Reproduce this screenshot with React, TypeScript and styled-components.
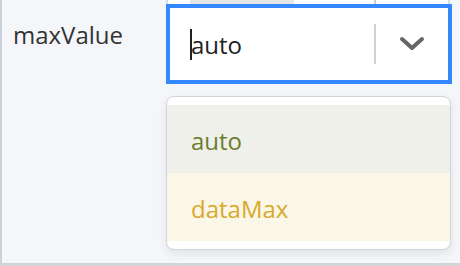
import styled, { createGlobalStyle } from "styled-components";

const GlobalStyle = createGlobalStyle`
  body {
    margin: 0;
    font-family: "Open Sans", "Noto Sans", sans-serif;
  }
`;

const Panel = styled.div`
  width: 460px;
  height: 266px;
  box-sizing: border-box;
  background: #f5f6fa;
  border-left: 2px solid #cbd2dc;
  border-bottom: 3px solid #d3d3d6;
  overflow: hidden;
  display: flex;
  flex-direction: column;
`;

const PrevRow = styled.div`
  height: 4px;
  padding-left: 164px;
  display: flex;
`;

const PrevBox = styled.div`
  width: 284px;
  box-sizing: border-box;
  background: #fff;
  border-left: 2px solid #dcdde2;
  border-right: 2px solid #dcdde2;
  display: flex;
`;

const PrevChip = styled.div`
  width: 104px;
  margin-left: 22px;
  background: #e6e6e6;
`;

const PrevValue = styled.div`
  flex: 1;
  display: flex;
`;

const FieldRow = styled.div`
  display: grid;
  grid-template-columns: 164px 286px;
  align-items: start;
`;

const Label = styled.div`
  padding: 15px 0 0 11px;
  font-size: 24px;
  line-height: 32px;
  color: #333;
`;

const Field = styled.div`
  display: flex;
  flex-direction: column;
`;

const Select = styled.div`
  height: 80px;
  box-sizing: border-box;
  border: 4px solid #3388ff;
  background: #fff;
  display: flex;
  align-items: center;
`;

const ValueArea = styled.div`
  flex: 1;
  display: flex;
  align-items: center;
  padding: 2px 0 0 20px;
  font-size: 24px;
  line-height: 32px;
  color: #222;
`;

const Caret = styled.span`
  width: 2px;
  height: 31px;
  background: #222;
  margin-right: -1px;
  margin-top: -2px;
`;

const Indicator = styled.div<{ $height?: number }>`
  width: 74px;
  height: ${(p) => p.$height ?? 40}px;
  box-sizing: border-box;
  border-left: 2px solid ${(p) => (p.$height ? "#cfcfcf" : "#d0d0d0")};
  display: flex;
  align-items: center;
  justify-content: center;
`;

const Menu = styled.div`
  margin-top: 12px;
  width: 285px;
  box-sizing: border-box;
  background: #fff;
  border: 1.5px solid #d2d3da;
  border-radius: 8px;
  padding: 8px 0;
  box-shadow: 0 4px 10px rgba(0, 0, 0, 0.08);
  overflow: hidden;
`;

const Option = styled.div<{ $bg: string; $color: string }>`
  height: 68px;
  box-sizing: border-box;
  padding: 4px 0 0 24px;
  display: flex;
  align-items: center;
  font-size: 24px;
  line-height: 32px;
  background: ${(p) => p.$bg};
  color: ${(p) => p.$color};
`;

const Chevron = () => (
  <svg width="26" height="16" viewBox="0 0 26 16">
    <polyline
      points="3,3 13,12 23,3"
      fill="none"
      stroke="#666"
      strokeWidth="4"
      strokeLinejoin="round"
      strokeLinecap="round"
    />
  </svg>
);

const options = [
  { label: "auto", bg: "#f0f0eb", color: "#6b7d2f" },
  { label: "dataMax", bg: "#faf6e8", color: "#d9a92c" },
];

export default function App() {
  return (
    <>
      <GlobalStyle />
      <Panel>
        <PrevRow>
          <PrevBox>
            <PrevValue>
              <PrevChip />
            </PrevValue>
            <Indicator $height={4} />
          </PrevBox>
        </PrevRow>
        <FieldRow>
          <Label>maxValue</Label>
          <Field>
            <Select>
              <ValueArea>
                <Caret />
                auto
              </ValueArea>
              <Indicator>
                <Chevron />
              </Indicator>
            </Select>
            <Menu>
              {options.map((o) => (
                <Option key={o.label} $bg={o.bg} $color={o.color}>
                  {o.label}
                </Option>
              ))}
            </Menu>
          </Field>
        </FieldRow>
      </Panel>
    </>
  );
}
